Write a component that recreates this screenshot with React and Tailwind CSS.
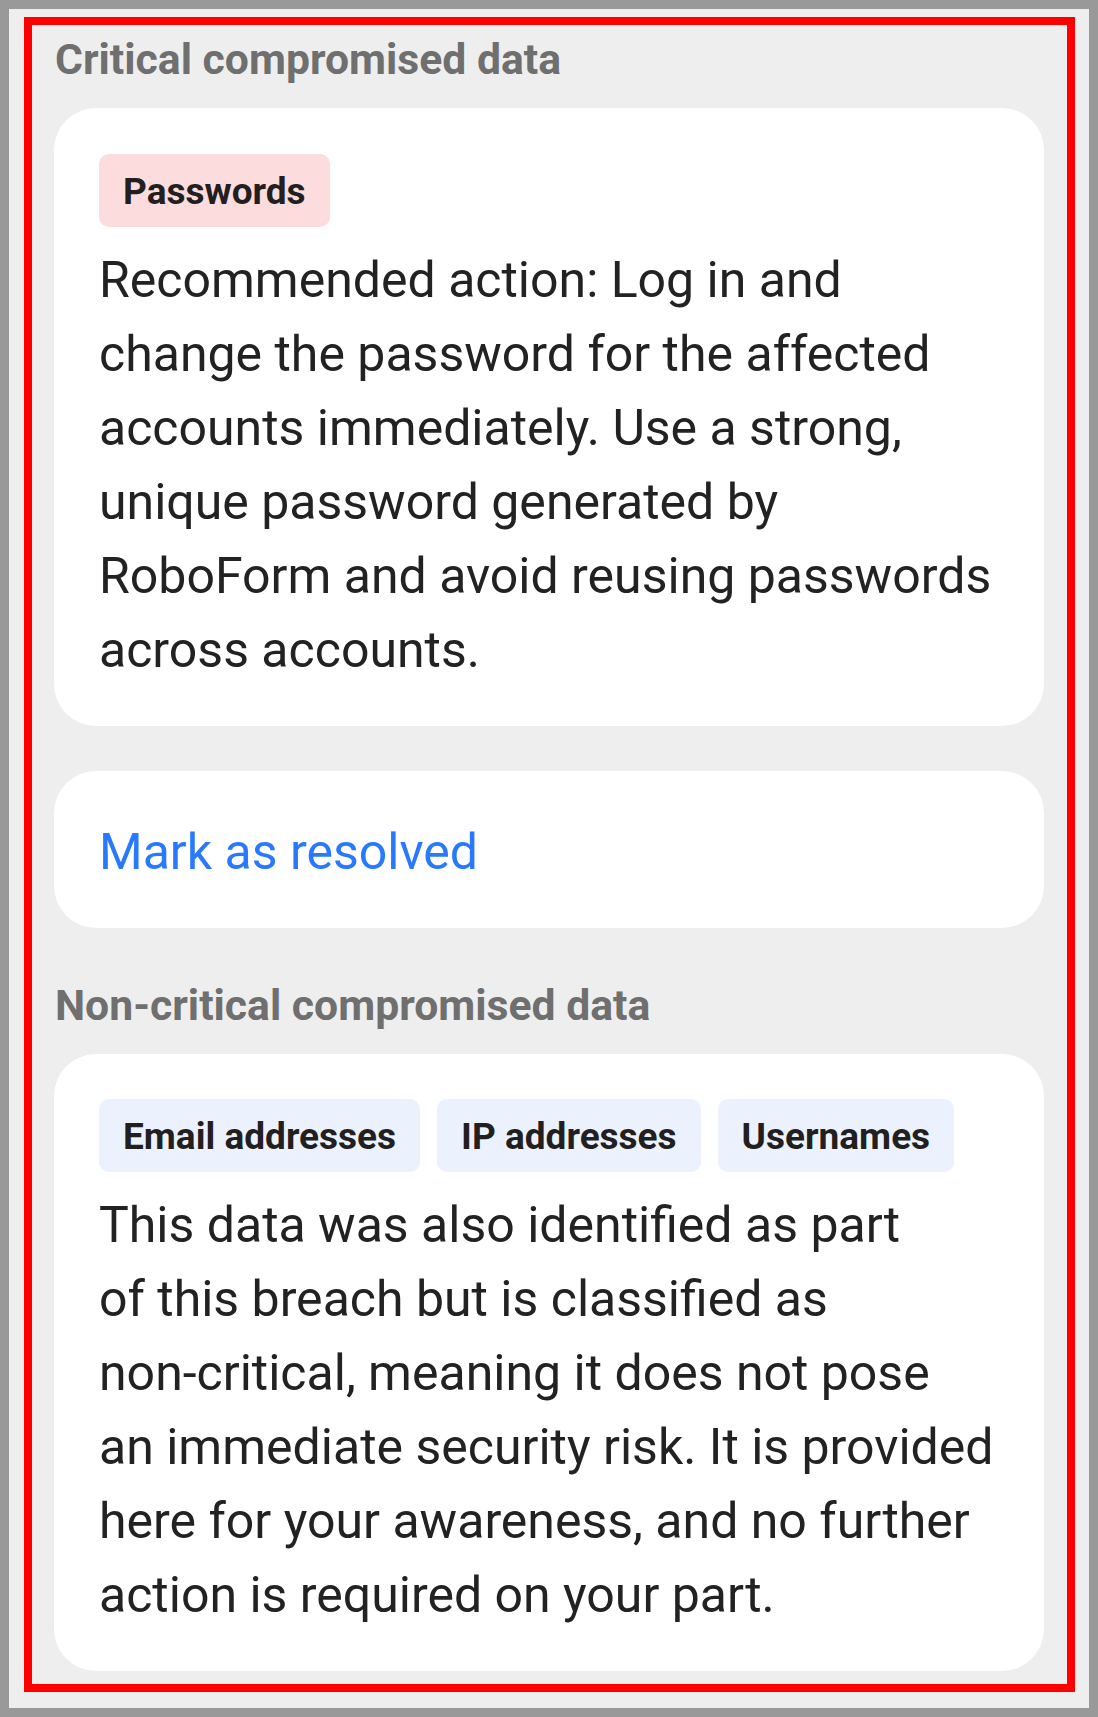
import React from 'react';

const Badge = ({ children, tone }) => {
  const tones = {
    red: 'bg-[#fcdcdc]',
    blue: 'bg-[#ebf2fe]',
  };
  return (
    <span
      className={`inline-block rounded-[10px] px-[24px] pt-[15px] pb-[13px] text-[37px] leading-[45px] font-bold text-[#231f20] ${tones[tone]}`}
    >
      {children}
    </span>
  );
};

const SectionTitle = ({ children, className = '' }) => (
  <h2 className={`text-[42.7px] leading-[50px] font-bold text-[#6f6f6f] pl-[1px] ${className}`}>
    {children}
  </h2>
);

const Card = ({ children, className = '' }) => (
  <div className={`bg-white rounded-[42px] pl-[45px] pr-[45px] ${className}`}>{children}</div>
);

const Paragraph = ({ lines }) => (
  <p className="mt-[16px] text-[50px] leading-[74px] text-[#222222] whitespace-nowrap">
    {lines.map((line, i) => (
      <React.Fragment key={i}>
        {line}
        {i < lines.length - 1 && <br />}
      </React.Fragment>
    ))}
  </p>
);

export default function App() {
  return (
    <div
      className="min-h-[1717px] border-[9px] border-[#999999] bg-[#eeeeee] pt-[8px] pl-[15px] pr-[14px] pb-[16px]"
      style={{ fontFamily: 'Roboto, "Noto Sans", sans-serif' }}
    >
      <div className="border-[8px] border-[#ff0000] pl-[22px] pr-[23px] pt-[9px] pb-[13px]">
        {/* Critical */}
        <SectionTitle className="mb-[24px]">Critical compromised data</SectionTitle>
        <Card className="pt-[46px] pb-[39px]">
          <Badge tone="red">Passwords</Badge>
          <Paragraph
            lines={[
              'Recommended action: Log in and',
              'change the password for the affected',
              'accounts immediately. Use a strong,',
              'unique password generated by',
              'RoboForm and avoid reusing passwords',
              'across accounts.',
            ]}
          />
        </Card>

        <Card className="mt-[45px] pt-[44px] pb-[39px]">
          <button className="text-[50px] leading-[74px] text-[#2979ff]">Mark as resolved</button>
        </Card>

        {/* Non-critical */}
        <SectionTitle className="mt-[52px] mb-[24px]">Non-critical compromised data</SectionTitle>
        <Card className="pt-[45px] pb-[39px]">
          <div className="flex gap-[17px]">
            <Badge tone="blue">Email addresses</Badge>
            <Badge tone="blue">IP addresses</Badge>
            <Badge tone="blue">Usernames</Badge>
          </div>
          <Paragraph
            lines={[
              'This data was also identified as part',
              'of this breach but is classified as',
              'non-critical, meaning it does not pose',
              'an immediate security risk. It is provided',
              'here for your awareness, and no further',
              'action is required on your part.',
            ]}
          />
        </Card>
      </div>
    </div>
  );
}
